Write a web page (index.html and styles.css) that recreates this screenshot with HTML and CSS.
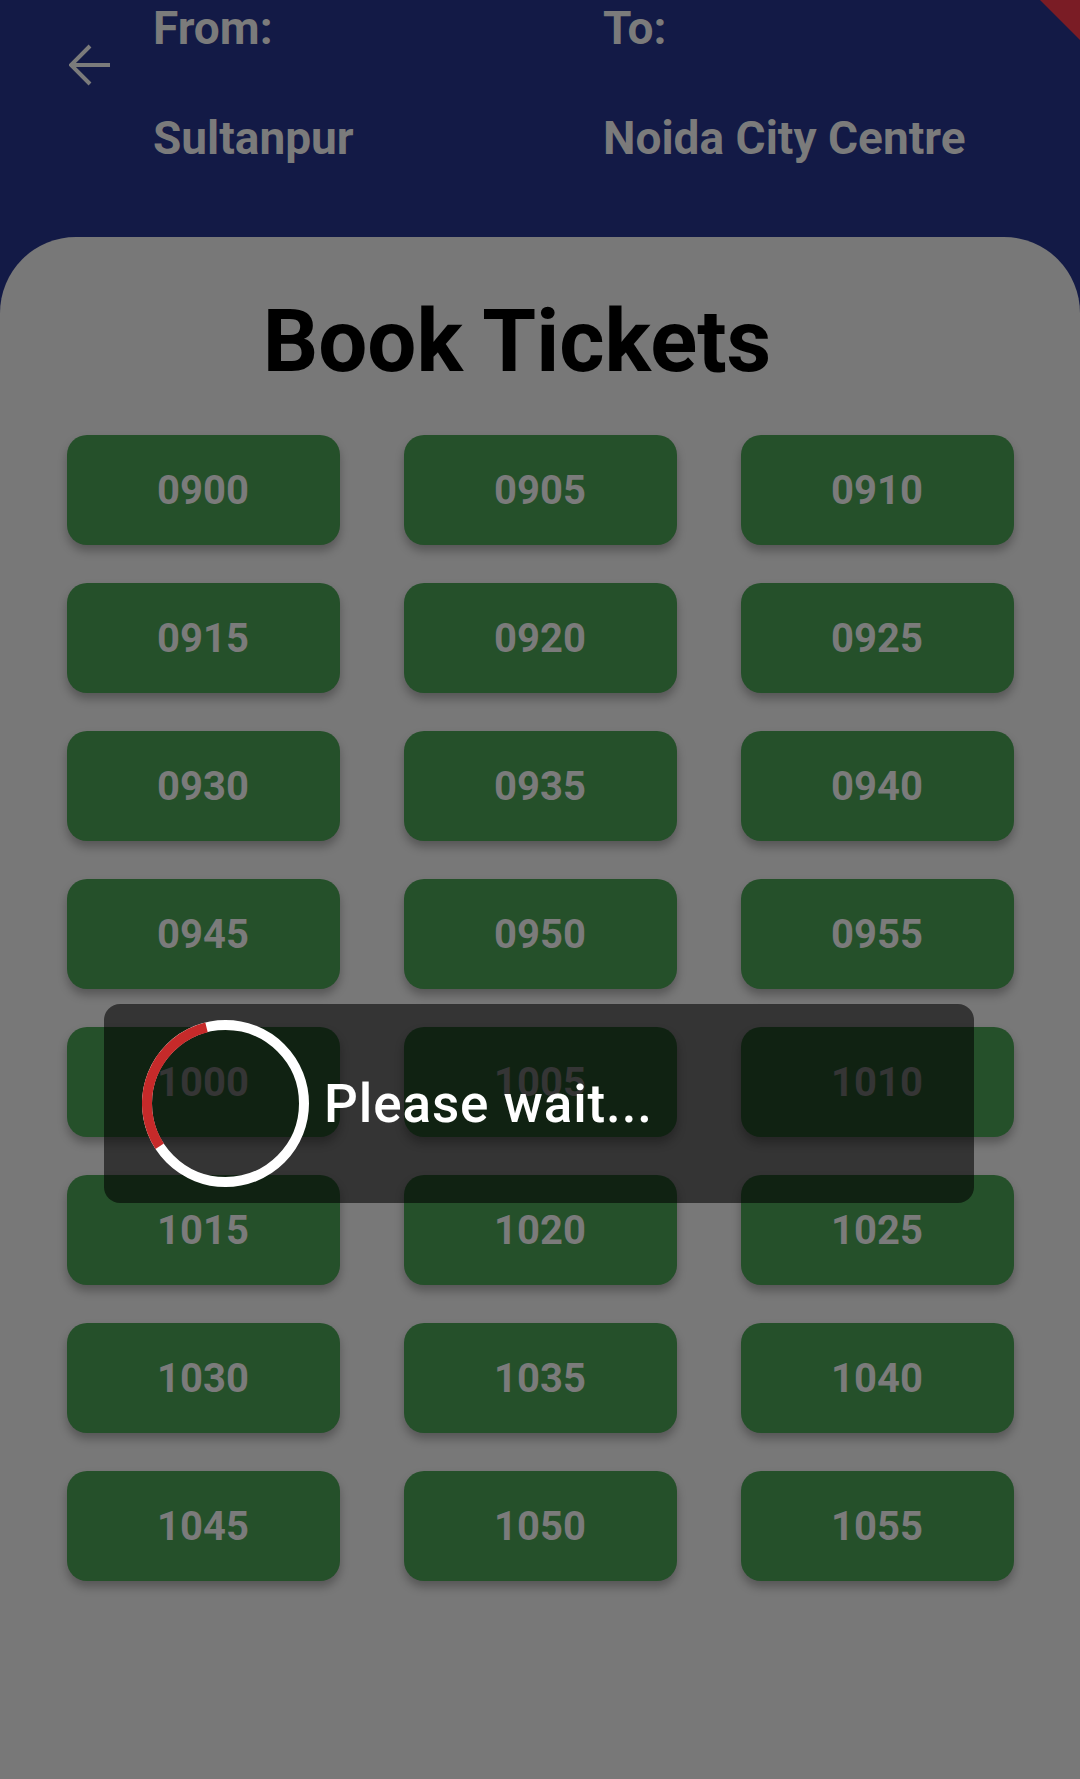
FILE: index.html
```html
<!DOCTYPE html>
<html>
<head>
<meta charset="utf-8">
<link rel="stylesheet" href="styles.css">
</head>
<body>
<div class="screen">
  <header class="header">
    <svg class="back" width="42" height="42" viewBox="0 0 42 42">
      <path d="M2 21 H41 M21 2 L2 21 L21 40" fill="none" stroke="#7b7b7b" stroke-width="4" stroke-linecap="butt" stroke-linejoin="miter"/>
    </svg>
    <div class="col col-from">
      <div class="label">From:</div>
      <div class="station">Sultanpur</div>
    </div>
    <div class="col col-to">
      <div class="label">To:</div>
      <div class="station">Noida City Centre</div>
    </div>
  </header>
  <main class="card">
    <h1 class="title">Book Tickets</h1>
    <div class="grid">
      <div class="slot">0900</div>
      <div class="slot">0905</div>
      <div class="slot">0910</div>
      <div class="slot">0915</div>
      <div class="slot">0920</div>
      <div class="slot">0925</div>
      <div class="slot">0930</div>
      <div class="slot">0935</div>
      <div class="slot">0940</div>
      <div class="slot">0945</div>
      <div class="slot">0950</div>
      <div class="slot">0955</div>
      <div class="slot">1000</div>
      <div class="slot">1005</div>
      <div class="slot">1010</div>
      <div class="slot">1015</div>
      <div class="slot">1020</div>
      <div class="slot">1025</div>
      <div class="slot">1030</div>
      <div class="slot">1035</div>
      <div class="slot">1040</div>
      <div class="slot">1045</div>
      <div class="slot">1050</div>
      <div class="slot">1055</div>
    </div>
  </main>
  <div class="dialog">
    <svg class="spinner" width="167" height="167" viewBox="0 0 167 167">
      <circle cx="83.5" cy="83.5" r="78.5" fill="none" stroke="#ffffff" stroke-width="10"/>
      <path d="M17.66 126.25 A78.5 78.5 0 0 1 64.51 7.33" fill="none" stroke="#c62a2a" stroke-width="10"/>
    </svg>
    <div class="wait">Please wait...</div>
  </div>
  <div class="banner"></div>
</div>
</body>
</html>
```
FILE: styles.css
```css
html, body {
  margin: 0;
  padding: 0;
}
body {
  width: 1080px;
  height: 1779px;
  overflow: hidden;
  background: #131a46;
  font-family: Roboto, "Liberation Sans", sans-serif;
}
.screen {
  position: relative;
  width: 1080px;
  height: 1779px;
  display: flex;
  flex-direction: column;
}
.header {
  height: 237px;
  display: flex;
  align-items: flex-start;
  padding-left: 69px;
  box-sizing: border-box;
  flex: none;
}
.back {
  margin-top: 44px;
  flex: none;
}
.col {
  display: flex;
  flex-direction: column;
  gap: 60px;
  padding-top: 3px;
  color: #7b7b7b;
  font-weight: 700;
  font-size: 46px;
  line-height: 50px;
  white-space: nowrap;
}
.col-from {
  margin-left: 42px;
  width: 450px;
}
.card {
  flex: 1;
  background: #787878;
  border-radius: 76px 76px 0 0;
  padding-top: 53px;
  display: flex;
  flex-direction: column;
  align-items: center;
}
.title {
  margin: 0;
  font-size: 87px;
  font-weight: 700;
  line-height: 103px;
  color: #000;
  padding-right: 46px;
}
.grid {
  margin-top: 42px;
  display: grid;
  grid-template-columns: repeat(3, 273px);
  grid-auto-rows: 110px;
  column-gap: 64px;
  row-gap: 38px;
}
.slot {
  background: #25502a;
  border-radius: 20px;
  box-shadow: 0 6px 10px rgba(0, 0, 0, 0.28);
  display: flex;
  align-items: center;
  justify-content: center;
  color: #7b7b7b;
  font-weight: 700;
  font-size: 40px;
}
.dialog {
  position: absolute;
  left: 104px;
  top: 1004px;
  width: 870px;
  height: 199px;
  border-radius: 16px;
  background: rgba(0, 0, 0, 0.57);
  display: flex;
  align-items: center;
  padding-left: 38px;
  box-sizing: border-box;
  gap: 15px;
}
.spinner {
  flex: none;
}
.wait {
  color: #ffffff;
  font-size: 53px;
  font-weight: 500;
  letter-spacing: 0.9px;
  white-space: nowrap;
}
.banner {
  position: absolute;
  top: 0;
  right: 0;
  width: 40px;
  height: 40px;
  background: #7a1c25;
  clip-path: polygon(0 0, 100% 0, 100% 100%);
}
```
